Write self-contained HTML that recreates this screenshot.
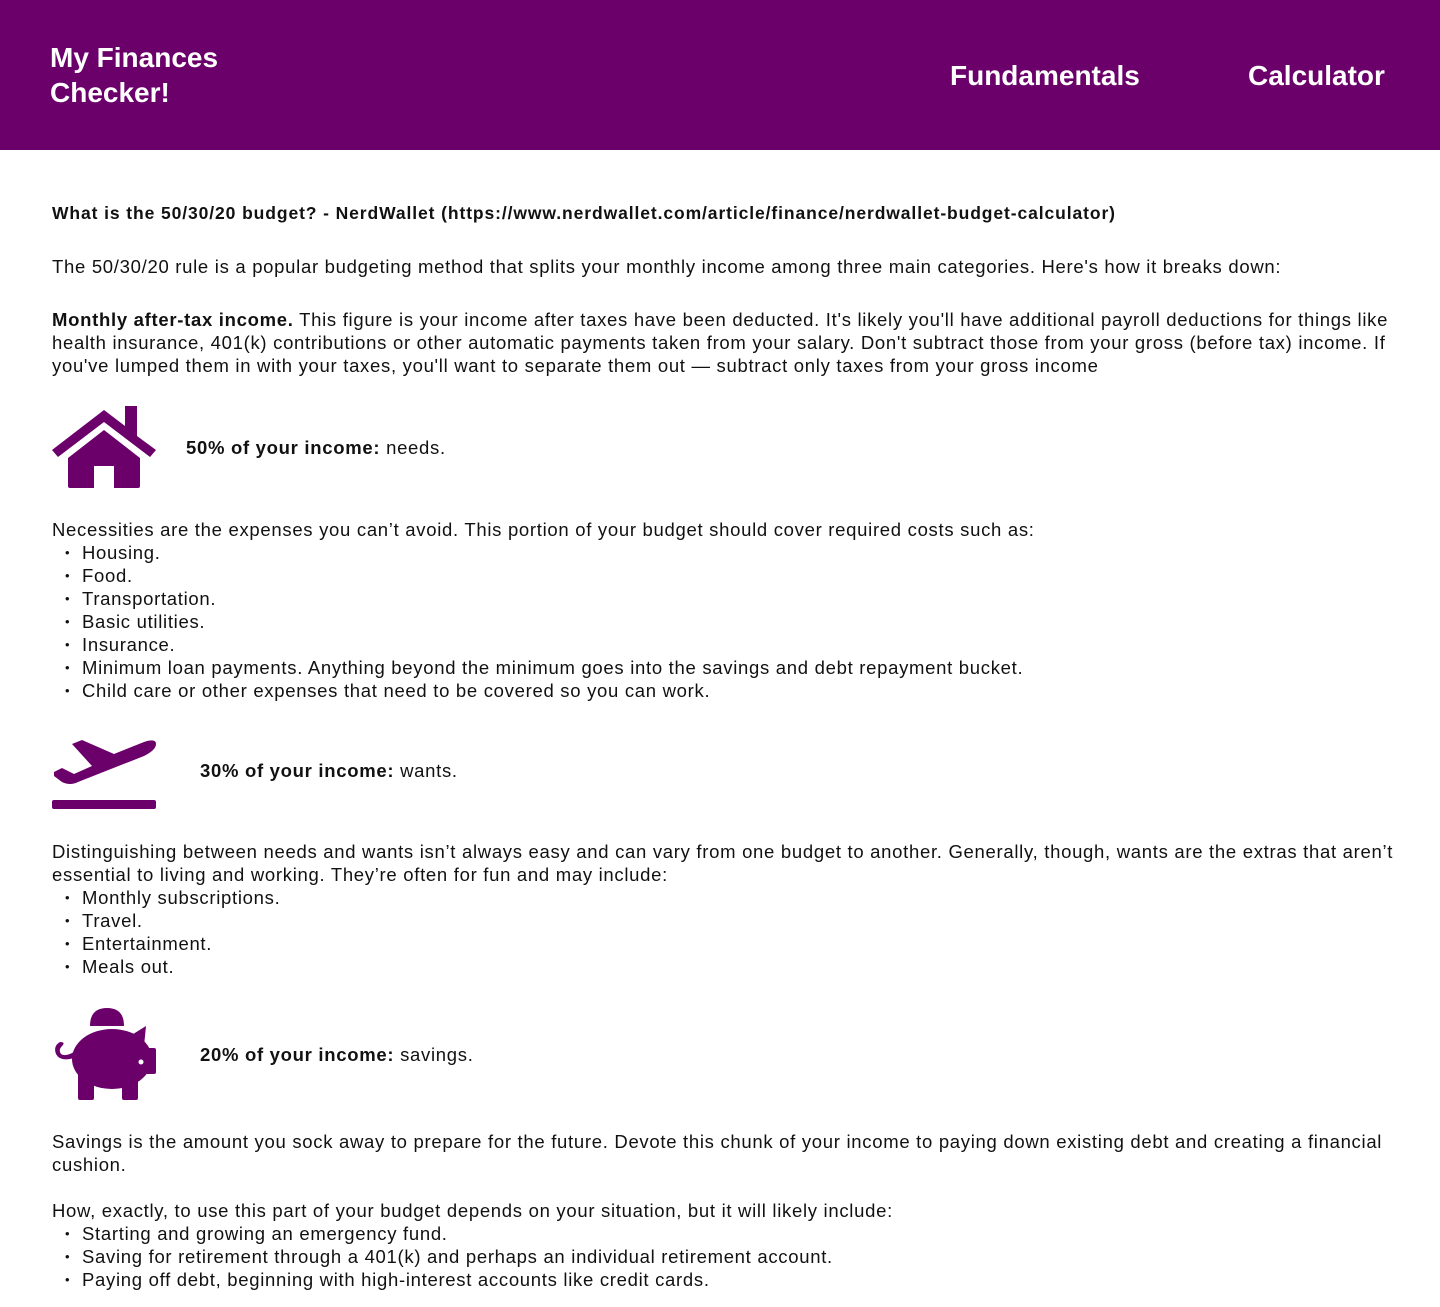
<!DOCTYPE html>
<html><head><meta charset="utf-8"><style>
*{margin:0;padding:0;box-sizing:border-box}
body{width:1440px;height:1307px;background:#fff;font-family:"Liberation Sans",Arial,sans-serif;color:#111;position:relative;overflow:hidden}
.hdr{position:absolute;left:0;top:0;width:1440px;height:150px;background:#6b006b;color:#fff;font-weight:bold}
.logo{position:absolute;left:50px;top:40px;font-size:28px;line-height:35px}
.nav{position:absolute;top:58px;font-size:28px;line-height:35px}
.t{position:absolute;left:52px;font-size:18.5px;line-height:23px;width:1388px;letter-spacing:0.7px;white-space:nowrap}
ul{list-style:none}
li{position:relative;padding-left:30px}
li:before{content:"•";position:absolute;left:13px;font-size:13px}
svg{position:absolute;left:52px}
</style></head><body>
<div class="hdr">
<div class="logo">My Finances<br>Checker!</div>
<div class="nav" style="left:950px">Fundamentals</div>
<div class="nav" style="left:1248px">Calculator</div>
</div>
<div class="t" style="top:202px;font-weight:bold;font-size:17.5px;letter-spacing:0.9px">What is the 50/30/20 budget? - NerdWallet (https://www.nerdwallet.com/article/finance/nerdwallet-budget-calculator)</div>
<div class="t" style="top:255px">The 50/30/20 rule is a popular budgeting method that splits your monthly income among three main categories. Here's how it breaks down:</div>
<div class="t" style="top:308px"><b>Monthly after-tax income.</b> This figure is your income after taxes have been deducted. It's likely you'll have additional payroll deductions for things like<br>health insurance, 401(k) contributions or other automatic payments taken from your salary. Don't subtract those from your gross (before tax) income. If<br>you've lumped them in with your taxes, you'll want to separate them out — subtract only taxes from your gross income</div>

<svg style="top:406px" width="104" height="82" viewBox="0 0 104 82"><path d="M0 44 L52 4 L73 20 L73 0 L85 0 L85 30 L104 44 L98 51 L52 16 L6 51Z M16 52 L52 24 L88 52 L88 80 Q88 82 86 82 L62 82 L62 60 L42 60 L42 82 L18 82 Q16 82 16 80Z" fill="#6b006b"/></svg>
<div class="t" style="top:436px;left:186px"><b>50% of your income:</b> needs.</div>

<div class="t" style="top:518px">Necessities are the expenses you can’t avoid. This portion of your budget should cover required costs such as:
<ul><li>Housing.</li><li>Food.</li><li>Transportation.</li><li>Basic utilities.</li><li>Insurance.</li><li>Minimum loan payments. Anything beyond the minimum goes into the savings and debt repayment bucket.</li><li>Child care or other expenses that need to be covered so you can work.</li></ul></div>

<svg style="top:732px" width="104" height="78" viewBox="0 0 104 78"><path d="M2 40 L10 36 L22 42 L40 34 L20 12 L30 8 L62 22 L92 10 Q104 6 104 12 Q104 18 92 24 L26 50 Q18 54 10 50 L2 44Z" fill="#6b006b"/><rect x="0" y="68" width="104" height="9" rx="2" fill="#6b006b"/></svg>
<div class="t" style="top:759px;left:200px"><b>30% of your income:</b> wants.</div>

<div class="t" style="top:840px">Distinguishing between needs and wants isn’t always easy and can vary from one budget to another. Generally, though, wants are the extras that aren’t<br>essential to living and working. They’re often for fun and may include:
<ul><li>Monthly subscriptions.</li><li>Travel.</li><li>Entertainment.</li><li>Meals out.</li></ul></div>

<svg style="top:1006px" width="106" height="96" viewBox="0 0 106 96" fill="#6b006b"><path d="M38 20 Q38 2 55 2 Q72 2 72 20Z"/><ellipse cx="60" cy="53" rx="40" ry="30"/><path d="M78 30 L94 20 L92 40Z"/><rect x="90" y="42" width="14" height="26" rx="2"/><rect x="26" y="66" width="16" height="28" rx="2"/><rect x="70" y="66" width="16" height="28" rx="2"/><path d="M22 52 Q8 56 4 48 Q1 40 8 36 Q14 36 10 40 Q6 44 9 48 Q13 51 22 46Z"/><circle cx="89" cy="56" r="2.5" fill="#fff"/></svg>
<div class="t" style="top:1043px;left:200px"><b>20% of your income:</b> savings.</div>

<div class="t" style="top:1130px">Savings is the amount you sock away to prepare for the future. Devote this chunk of your income to paying down existing debt and creating a financial<br>cushion.</div>
<div class="t" style="top:1199px">How, exactly, to use this part of your budget depends on your situation, but it will likely include:
<ul><li>Starting and growing an emergency fund.</li><li>Saving for retirement through a 401(k) and perhaps an individual retirement account.</li><li>Paying off debt, beginning with high-interest accounts like credit cards.</li></ul></div>
</body></html>
